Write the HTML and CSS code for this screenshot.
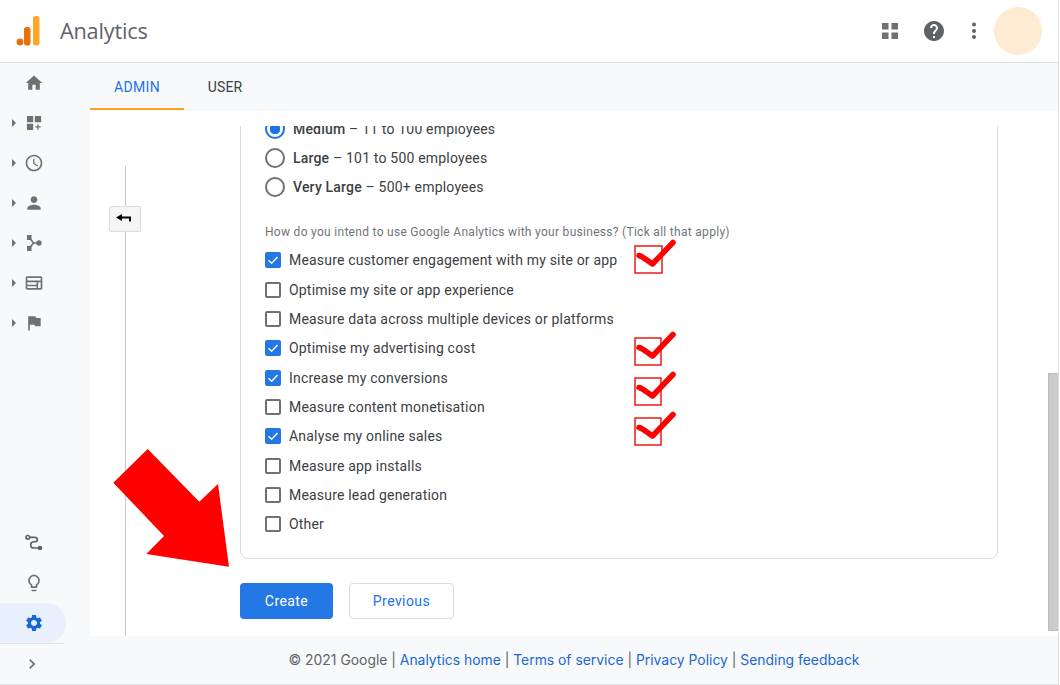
FILE: index.html
```html
<!DOCTYPE html>
<html lang="en">
<head>
<meta charset="utf-8">
<title>Analytics</title>
<link rel="stylesheet" href="styles.css">
</head>
<body>
<div class="app">
  <header class="topbar">
    <svg class="logo" viewBox="0 0 30 32" width="30" height="32">
      <circle cx="7" cy="27" r="3.4" fill="#e8710a"/>
      <rect x="11" y="12" width="6.5" height="18.5" rx="2.5" fill="#e8710a"/>
      <rect x="20" y="1" width="6.5" height="29.5" rx="2.5" fill="#ffa62b"/>
    </svg>
    <span class="brand">Analytics</span>
    <div class="top-actions">
      <svg class="top-icon" viewBox="0 0 24 24" width="24" height="24"><path fill="#6e7073" d="M4 4h6.500v6.500H4zM13.500 4H20v6.500h-6.500zM4 13.500h6.500V20H4zM13.500 13.500H20V20h-6.500z"/></svg>
      <svg class="top-icon help" viewBox="0 0 24 24" width="24" height="24"><path fill="#5f6368" d="M12 2C6.480 2 2 6.480 2 12s4.480 10 10 10 10-4.480 10-10S17.520 2 12 2zm1 17h-2v-2h2v2zm2.070-7.750l-.9.920C13.450 12.900 13 13.500 13 15h-2v-.5c0-1.100.45-2.100 1.170-2.830l1.240-1.260c.37-.36.59-.86.59-1.410 0-1.100-.9-2-2-2s-2 .9-2 2H8c0-2.210 1.790-4 4-4s4 1.790 4 4c0 .88-.36 1.680-.93 2.250z"/></svg>
      <svg class="top-icon more" viewBox="0 0 24 24" width="24" height="24"><g fill="#5f6368"><circle cx="12" cy="5.500" r="2"/><circle cx="12" cy="12" r="2"/><circle cx="12" cy="18" r="2"/></g></svg>
      <div class="avatar"></div>
    </div>
  </header>
  <div class="workspace">
    <nav class="sidebar">
      <div class="nav-item"><svg class="nav-icon" viewBox="0 0 24 24"><path d="M10 20v-6h4v6h5v-8h3L12 3 2 12h3v8z"/></svg></div>
      <div class="nav-item"><span class="caret"></span><svg class="nav-icon" viewBox="0 0 24 24"><path d="M3.500 3.500h7.500V11H3.500zM13 3.500h7.500V11H13zM3.500 13H11v7.500H3.500zM16 13.500h1.500V16H20v1.500h-2.500V20H16v-2.500h-2.500V16H16z"/></svg></div>
      <div class="nav-item"><span class="caret"></span><svg class="nav-icon" viewBox="0 0 24 24"><path d="M11.990 2C6.470 2 2 6.480 2 12s4.470 10 9.990 10C17.520 22 22 17.520 22 12S17.520 2 11.990 2zM12 20c-4.420 0-8-3.580-8-8s3.580-8 8-8 8 3.580 8 8-3.580 8-8 8zm.5-13H11v6l5.250 3.150.75-1.230-4.500-2.670z"/></svg></div>
      <div class="nav-item"><span class="caret"></span><svg class="nav-icon" viewBox="0 0 24 24"><path d="M12 12c2.210 0 4-1.790 4-4s-1.790-4-4-4-4 1.790-4 4 1.790 4 4 4zm0 2c-2.670 0-8 1.340-8 4v2h16v-2c0-2.660-5.330-4-8-4z"/></svg></div>
      <div class="nav-item"><span class="caret"></span><svg class="nav-icon" viewBox="0 0 24 24"><path d="M3.600 2.400h5.400v6H3.600zM3.600 15.600h5.400v6H3.600z"/><circle cx="18" cy="12" r="3.200"/><path class="link" d="M6 5l5.500 7H18M6 18.500l5.500-6.500"/></svg></div>
      <div class="nav-item"><span class="caret"></span><svg class="nav-icon" viewBox="0 0 24 24"><path d="M20 4H4c-1.100 0-2 .9-2 2v12c0 1.100.9 2 2 2h16c1.100 0 2-.9 2-2V6c0-1.100-.9-2-2-2zM4 6h16v3H4zm0 5h11v3H4zm0 5h11v2H4zm13-5h3v7h-3z"/></svg></div>
      <div class="nav-item"><span class="caret"></span><svg class="nav-icon" viewBox="0 0 24 24"><path d="M14.400 6L14 4H5v17h2v-7h5.600l.4 2h7V6z"/></svg></div>
      <div class="nav-bottom">
        <div class="nav-item"><svg class="nav-icon stroke" viewBox="0 0 24 24"><circle cx="4.600" cy="5.200" r="2.200"/><path d="M6.800 5.200H13c2.500 0 3 1 3 2.500s-1 2.800-4 2.800c-3 0-4 1-4 3.500S9 18 12 18h5"/><circle class="dot" cx="19.200" cy="18" r="2.800"/></svg></div>
        <div class="nav-item"><svg class="nav-icon" viewBox="0 0 24 24"><path d="M9 21c0 .55.45 1 1 1h4c.55 0 1-.45 1-1v-1H9v1zm3-19C8.140 2 5 5.140 5 9c0 2.380 1.190 4.470 3 5.740V17c0 .55.45 1 1 1h6c.55 0 1-.45 1-1v-2.260c1.810-1.270 3-3.360 3-5.740 0-3.860-3.140-7-7-7zm2.850 11.100l-.85.6V16h-4v-2.300l-.85-.6C7.800 12.160 7 10.630 7 9c0-2.760 2.240-5 5-5s5 2.240 5 5c0 1.630-.8 3.160-2.150 4.100z"/></svg></div>
        <div class="nav-item active"><svg class="nav-icon" viewBox="0 0 24 24"><path d="M19.140 12.940c.04-.3.060-.61.060-.94 0-.32-.02-.64-.07-.94l2.030-1.580c.18-.14.230-.41.120-.61l-1.920-3.320c-.12-.22-.37-.29-.59-.22l-2.390.96c-.5-.38-1.030-.7-1.620-.94l-.36-2.540c-.04-.24-.24-.41-.48-.41h-3.840c-.24 0-.43.170-.47.410l-.36 2.540c-.59.24-1.130.57-1.620.94l-2.390-.96c-.22-.08-.47 0-.59.22L2.740 8.870c-.12.210-.08.470.12.610l2.030 1.580c-.05.3-.09.630-.09.940s.02.640.07.940l-2.030 1.580c-.18.140-.23.410-.12.610l1.920 3.320c.12.220.37.290.59.220l2.390-.96c.5.380 1.030.7 1.620.94l.36 2.540c.05.240.24.410.48.410h3.840c.24 0 .44-.17.470-.41l.36-2.540c.59-.24 1.130-.56 1.620-.94l2.390.96c.22.080.47 0 .59-.22l1.920-3.320c.12-.22.07-.47-.12-.61l-2.010-1.580zM12 15.600c-1.980 0-3.600-1.620-3.600-3.600s1.620-3.600 3.600-3.600 3.600 1.620 3.600 3.600-1.620 3.600-3.600 3.600z"/></svg></div>
        <div class="nav-toggle"><svg class="nav-icon" viewBox="0 0 24 24"><path d="M8.590 16.590L13.170 12 8.590 7.410 10 6l6 6-6 6z"/></svg></div>
      </div>
    </nav>
    <div class="pane">
      <div class="tabs">
        <span class="tab selected">ADMIN</span>
        <span class="tab">USER</span>
      </div>
      <main class="scroller">
        <div class="rail">
          <div class="rail-line"></div>
          <button class="back" aria-label="Back"><svg viewBox="0 0 16 12" width="16" height="12"><path d="M1 4.500 7 1v2.500h9v5h-2v-3H7V8z" fill="#000"/></svg></button>
        </div>
        <div class="form">
          <div class="clip">
            <section class="card">
              <label class="radio-row"><span class="radio on"></span><span><b>Medium</b> – 11 to 100 employees</span></label>
              <label class="radio-row"><span class="radio"></span><span><b>Large</b> – 101 to 500 employees</span></label>
              <label class="radio-row"><span class="radio"></span><span><b>Very Large</b> – 500+ employees</span></label>
              <p class="question">How do you intend to use Google Analytics with your business? (Tick all that apply)</p>
              <div class="checks">
                <label class="check-row"><span class="box on"><svg viewBox="0 0 16 16"><path d="M3.500 8.200 6.700 11.300 12.500 5" fill="none" stroke="#fff" stroke-width="1.400"/></svg></span>Measure customer engagement with my site or app</label>
                <label class="check-row"><span class="box"></span>Optimise my site or app experience</label>
                <label class="check-row"><span class="box"></span>Measure data across multiple devices or platforms</label>
                <label class="check-row"><span class="box on"><svg viewBox="0 0 16 16"><path d="M3.500 8.200 6.700 11.300 12.500 5" fill="none" stroke="#fff" stroke-width="1.400"/></svg></span>Optimise my advertising cost</label>
                <label class="check-row"><span class="box on"><svg viewBox="0 0 16 16"><path d="M3.500 8.200 6.700 11.300 12.500 5" fill="none" stroke="#fff" stroke-width="1.400"/></svg></span>Increase my conversions</label>
                <label class="check-row"><span class="box"></span>Measure content monetisation</label>
                <label class="check-row"><span class="box on"><svg viewBox="0 0 16 16"><path d="M3.500 8.200 6.700 11.300 12.500 5" fill="none" stroke="#fff" stroke-width="1.400"/></svg></span>Analyse my online sales</label>
                <label class="check-row"><span class="box"></span>Measure app installs</label>
                <label class="check-row"><span class="box"></span>Measure lead generation</label>
                <label class="check-row"><span class="box"></span>Other</label>
              </div>
            </section>
          </div>
          <div class="actions">
            <button class="btn primary">Create</button>
            <button class="btn secondary">Previous</button>
          </div>
        </div>
        <div class="scrollbar"></div>
      </main>
      <footer class="footer">© 2021 Google | <a>Analytics home</a> | <a>Terms of service</a> | <a>Privacy Policy</a> | <a>Sending feedback</a></footer>
    </div>
  </div>
</div>
<svg class="annotations" viewBox="0 0 1060 685" width="1060" height="685">
  <polygon class="arrow" points="147.700,449 199.300,501.700 218,484 229,566.700 146.300,554 164,536 113.300,482.700"/>
  <g class="mark"><rect x="635" y="246" width="27" height="27"/><path d="M639 255.500c4 1 8 5 13.500 8.500L673 242.500"/></g>
  <g class="mark"><rect x="635" y="338" width="26" height="27"/><path d="M639 347.500c4 1 8 5 13.500 8.500L673 334.500"/></g>
  <g class="mark"><rect x="635" y="378" width="26" height="27"/><path d="M639 387.500c4 1 8 5 13.500 8.500L673 374.500"/></g>
  <g class="mark"><rect x="635" y="418" width="26" height="27"/><path d="M639 427.500c4 1 8 5 13.500 8.500L673 414.500"/></g>
</svg>
</body>
</html>
```
FILE: styles.css
```css
* { box-sizing: border-box; }
html, body { margin: 0; height: 100%; background: #fff; overflow: hidden; }
body { font-family: Roboto, "Liberation Sans", sans-serif; color: #3c4043; }

.app {
  width: 1059px;
  height: 685px;
  display: flex;
  flex-direction: column;
  border-right: 1px solid #e0e0e0;
  border-bottom: 1px solid #e0e0e0;
}

.topbar {
  flex: none;
  height: 63px;
  display: flex;
  align-items: center;
  background: #fff;
  border-bottom: 1px solid #dadce0;
  padding-left: 13px;
}
.logo { margin-top: -1px; }
.brand {
  margin-left: 17px;
  margin-top: -2px;
  font-family: "Open Sans", Roboto, sans-serif;
  font-size: 21.700px;
  color: #5f6368;
  letter-spacing: -0.2px;
}
.top-actions { margin-left: auto; display: flex; align-items: center; padding-right: 16px; }
.top-icon { display: block; }
.help { margin-left: 20px; }
.more { margin-left: 16px; }
.avatar {
  width: 48px;
  height: 48px;
  border-radius: 50%;
  background: #ffebd3;
  margin-left: 8px;
}

.workspace { flex: 1; min-height: 0; display: flex; }

.sidebar {
  flex: none;
  width: 90px;
  background: #f8f9fa;
  display: flex;
  flex-direction: column;
}
.nav-item {
  position: relative;
  height: 40px;
  width: 66px;
  display: flex;
  align-items: center;
  justify-content: center;
  padding-left: 2px;
}
.nav-icon { width: 20px; height: 20px; fill: #6e7073; display: block; }
.nav-icon .link { fill: none; stroke: #6e7073; stroke-width: 2; }
.nav-icon.stroke { fill: none; stroke: #5f6368; stroke-width: 2; }
.nav-icon.stroke .dot { fill: #5f6368; stroke: none; }
.caret {
  position: absolute;
  left: 12px;
  top: 16px;
  border-left: 4.500px solid #6e7073;
  border-top: 4.500px solid transparent;
  border-bottom: 4.500px solid transparent;
}
.nav-bottom { margin-top: auto; }
.nav-item.active { background: #e8f0fe; border-radius: 0 20px 20px 0; }
.nav-item.active .nav-icon { fill: #1967d2; }
.nav-toggle {
  width: 64px;
  height: 41px;
  margin-right: 2px;
  border-top: 1px solid #e3e4e6;
  display: flex;
  align-items: center;
  justify-content: center;
}

.pane { flex: 1; min-width: 0; display: flex; flex-direction: column; }

.tabs {
  flex: none;
  height: 48px;
  display: flex;
  background: #f8f9fa;
  font-size: 14px;
  font-weight: 400;
  letter-spacing: 0.35px;
}
.tab {
  height: 47px;
  display: flex;
  align-items: center;
  justify-content: center;
  color: #3c4043;
  padding-top: 1px;
}
.tab.selected {
  width: 94px;
  color: #1a73e8;
  border-bottom: 2px solid #ff9f1f;
  padding-top: 3px;
}
.tab:last-child { margin-left: 24px; width: 34px; letter-spacing: 0.1px; }

.scroller { position: relative; flex: 1; min-height: 0; display: flex; overflow: hidden; background: #fff; }

.rail { position: relative; flex: none; width: 150px; padding: 55px 0 0 35px; }
.rail-line { width: 1px; height: 100%; background: #c9c9c9; }
.back {
  position: absolute;
  left: 19px;
  top: 95px;
  width: 32px;
  height: 26px;
  padding: 0;
  display: flex;
  align-items: center;
  justify-content: center;
  background: #f5f5f5;
  border: 1px solid #dcdcdc;
  border-radius: 2px;
}
.back svg { margin-right: 4px; }

.form { width: 758px; padding-top: 15px; }
.clip { overflow: hidden; }
.card {
  margin-top: -20px;
  height: 453px;
  padding: 7.500px 24px 0;
  border: 1px solid #dadce0;
  border-radius: 8px;
  font-size: 14px;
  letter-spacing: 0.19px;
  color: #3c4043;
}
.card b { font-weight: 500; color: #3c4043; }

.radio-row { height: 29px; display: flex; align-items: center; gap: 8px; }
.radio { width: 20px; height: 20px; border: 2px solid #6e7073; border-radius: 50%; background: #fff; }
.radio.on { border-color: #1a73e8; background: radial-gradient(circle, #1a73e8 0 5px, #fff 5.500px); }

.question { margin: 22px 0 0; height: 16px; line-height: 16px; font-size: 12px; color: #70757a; letter-spacing: 0.295px; white-space: nowrap; }

.checks { margin-top: 6.200px; }
.check-row { height: 29.330px; display: flex; align-items: center; gap: 8px; white-space: nowrap; }
.box { flex: none; width: 16px; height: 16px; border: 2px solid #6e7073; border-radius: 2px; background: #fff; }
.box.on { border: 0; background: #2378e6; }
.box svg { display: block; width: 16px; height: 16px; }

.actions { display: flex; gap: 16px; margin-top: 24px; }
.btn {
  height: 36px;
  border-radius: 4px;
  font-family: Roboto, "Liberation Sans", sans-serif;
  font-size: 14px;
  font-weight: 400;
  letter-spacing: 0.42px;
  padding: 0;
}
.btn.primary { width: 93px; background: #2378e6; color: #fff; border: 0; }
.btn.secondary { width: 105px; background: #fff; color: #1a73e8; border: 1px solid #dadce0; }

.scrollbar {
  position: absolute;
  left: 958px;
  top: 262px;
  width: 10px;
  height: 258px;
  background: #cbcbcb;
  border: 1px solid #bdbdbd;
  border-width: 1px 0 1px 1px;
}

.footer {
  flex: none;
  height: 48px;
  line-height: 48px;
  background: #f8f9fa;
  text-align: center;
  white-space: nowrap;
  font-family: Inter, Roboto, sans-serif;
  font-size: 13.900px;
  color: #5f6368;
}
.footer a { color: #1a67d2; }

.annotations { position: absolute; left: 0; top: 0; pointer-events: none; }
.arrow { fill: #ff0000; }
.mark rect { fill: none; stroke: #f01818; stroke-width: 1.500; }
.mark path { fill: none; stroke: #ff0000; stroke-width: 5.500; stroke-linecap: round; stroke-linejoin: round; }
```
